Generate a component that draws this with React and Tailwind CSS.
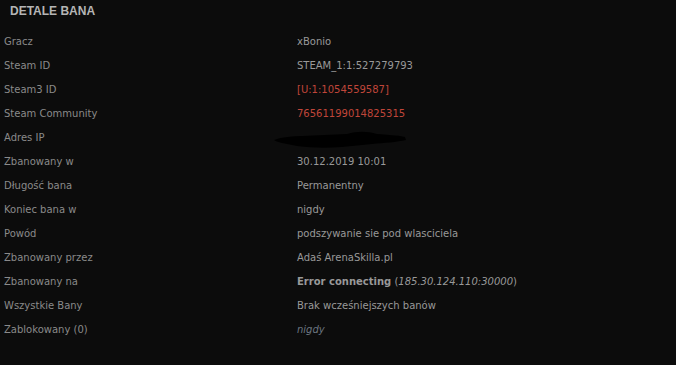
import React from "react";

const Row = ({ label, children }) => (
  <div className="grid grid-cols-[293px_1fr] h-[24px] items-center">
    <div className="text-[#8a8a8a]">{label}</div>
    <div className="text-[#999999] relative">{children}</div>
  </div>
);

export default function App() {
  return (
    <div className="w-[676px] h-[365px] bg-[#0c0c0c] overflow-hidden" style={{ fontFamily: '"DejaVu Sans", Verdana, sans-serif' }}>
      <div className="h-[30px] pl-[10px] pt-[3px] flex items-start">
        <span className="text-[12px] font-bold text-[#b5b5b5] leading-[16px]" style={{ fontFamily: '"Liberation Sans", Arial, sans-serif' }}>
          DETALE BANA
        </span>
      </div>
      <div className="pl-[4px] text-[10px] leading-[12px]">
        <Row label="Gracz">xBonio</Row>
        <Row label="Steam ID">STEAM_1:1:527279793</Row>
        <Row label="Steam3 ID"><span className="text-[#c0463a]">[U:1:1054559587]</span></Row>
        <Row label="Steam Community"><span className="text-[#c0463a]">76561199014825315</span></Row>
        <Row label="Adres IP">
          <svg className="absolute left-[-25px] top-[-10px]" width="136" height="24" viewBox="0 0 136 24">
            <path d="M2 12 C10 9 20 8 30 8 C45 7 60 7 75 6 C85 3 95 3 105 6 C115 7 125 7 133 9 L134 12 C125 14 112 15 100 16 C90 17 80 18 70 19 C55 20 40 20 25 18 C20 17 15 16 10 15 C6 14 3 13 2 12 Z" fill="#000000" />
          </svg>
        </Row>
        <Row label="Zbanowany w">30.12.2019 10:01</Row>
        <Row label="Długość bana">Permanentny</Row>
        <Row label="Koniec bana w">nigdy</Row>
        <Row label="Powód">podszywanie sie pod wlasciciela</Row>
        <Row label="Zbanowany przez">Adaś ArenaSkilla.pl</Row>
        <Row label="Zbanowany na">
          <span className="font-bold">Error connecting</span> (<span className="italic">185.30.124.110:30000</span>)
        </Row>
        <Row label="Wszystkie Bany">Brak wcześniejszych banów</Row>
        <Row label="Zablokowany (0)"><span className="italic text-[#6b7580]">nigdy</span></Row>
      </div>
    </div>
  );
}
